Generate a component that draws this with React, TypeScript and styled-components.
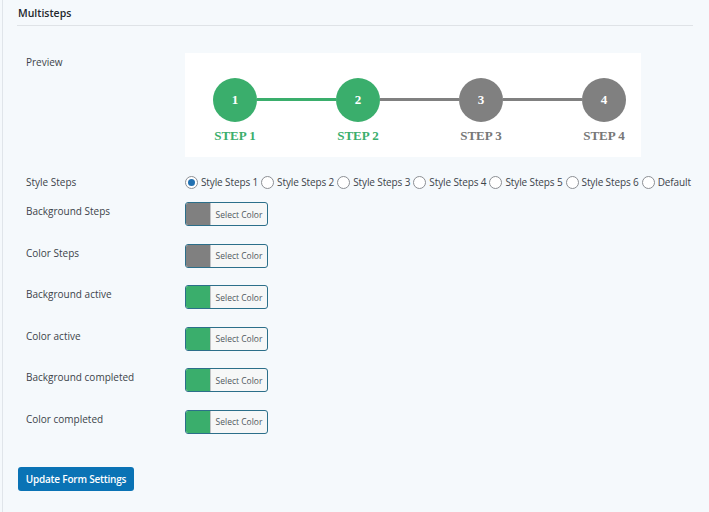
import styled, { createGlobalStyle } from "styled-components";

const GlobalStyle = createGlobalStyle`
  html, body {
    margin: 0;
    padding: 0;
    background: #f5f9fc;
  }
  body {
    font-family: "Open Sans", "Noto Sans", sans-serif;
    color: #3c434a;
  }
`;

const GREEN = "#3aae6c";
const GREY = "#808080";

const Page = styled.div`
  margin-left: 2px;
  min-height: 512px;
  border-left: 1px solid #e0e5ea;
  box-sizing: border-box;
`;

const Header = styled.div`
  margin: 0 16px 0 14px;
  height: 25px;
  border-bottom: 1px solid #dfe3e7;
  display: flex;
  align-items: center;
  padding-left: 1px;
`;

const Title = styled.h2`
  margin: 0;
  font-size: 10.5px;
  font-weight: 600;
  color: #23282d;
`;

const Form = styled.div`
  padding: 27px 0 0 15px;
  display: flex;
  flex-direction: column;
`;

const Row = styled.div<{ $height: number; $top?: number }>`
  display: grid;
  grid-template-columns: 159px 1fr;
  padding-left: 8px;
  height: ${(p) => p.$height}px;
  margin-top: ${(p) => p.$top ?? 0}px;
`;

const Label = styled.div<{ $pad?: number }>`
  font-size: 10px;
  line-height: 14px;
  padding-top: ${(p) => p.$pad ?? 2}px;
  color: #3c434a;
`;

const PreviewBox = styled.div`
  width: 456px;
  height: 104px;
  background: #fff;
  box-sizing: border-box;
  padding: 25px 0 0 28px;
  display: flex;
  align-items: flex-start;
`;

const Step = styled.div`
  width: 44px;
  display: flex;
  flex-direction: column;
  align-items: center;
`;

const Circle = styled.div<{ $color: string }>`
  width: 44px;
  height: 44px;
  border-radius: 50%;
  background: ${(p) => p.$color};
  color: #fff;
  font-family: "Liberation Serif", "Times New Roman", serif;
  font-weight: 700;
  font-size: 13px;
  display: flex;
  align-items: center;
  justify-content: center;
`;

const StepName = styled.div<{ $color: string }>`
  margin-top: 6px;
  white-space: nowrap;
  font-family: "Liberation Serif", "Times New Roman", serif;
  font-weight: 700;
  font-size: 13px;
  line-height: 16px;
  color: ${(p) => p.$color};
`;

const Connector = styled.div<{ $color: string }>`
  width: 79px;
  height: 3px;
  margin-top: 20px;
  background: ${(p) => p.$color};
`;

const Radios = styled.div`
  display: flex;
  align-items: center;
  gap: 3px;
  font-size: 10px;
  letter-spacing: -0.12px;
  white-space: nowrap;
`;

const RadioItem = styled.label`
  display: flex;
  align-items: center;
  gap: 3px;
  color: #3c434a;
`;

const RadioDot = styled.span<{ $checked?: boolean }>`
  width: 13px;
  height: 13px;
  border-radius: 50%;
  border: 1px solid #8c8f94;
  background: #fff;
  box-sizing: border-box;
  display: flex;
  align-items: center;
  justify-content: center;
  &::after {
    content: "";
    width: 7px;
    height: 7px;
    border-radius: 50%;
    background: ${(p) => (p.$checked ? "#2271b1" : "transparent")};
  }
`;

const ColorButton = styled.div`
  width: 83px;
  height: 24px;
  box-sizing: border-box;
  border: 1px solid #2c6f8a;
  border-radius: 3px;
  display: flex;
  overflow: hidden;
  background: #f6f7f7;
`;

const Swatch = styled.span<{ $color: string }>`
  width: 24px;
  background: ${(p) => p.$color};
  border-right: 1px solid #c3c4c7;
`;

const SwatchText = styled.span`
  flex: 1;
  font-size: 8.5px;
  color: #50575e;
  display: flex;
  align-items: center;
  justify-content: center;
`;

const SubmitButton = styled.button`
  margin-top: 33px;
  width: 116px;
  height: 24px;
  border: none;
  border-radius: 3px;
  background: #0a73b5;
  color: #fff;
  font-family: "Open Sans", "Noto Sans", sans-serif;
  font-size: 10px;
  letter-spacing: -0.2px;
  font-weight: 600;
  padding: 0;
  align-self: flex-start;
`;

const steps = [
  { n: 1, color: GREEN },
  { n: 2, color: GREEN },
  { n: 3, color: GREY },
  { n: 4, color: GREY },
];

const styleOptions = [
  "Style Steps 1",
  "Style Steps 2",
  "Style Steps 3",
  "Style Steps 4",
  "Style Steps 5",
  "Style Steps 6",
  "Default",
];

const colorRows = [
  { label: "Background Steps", color: GREY },
  { label: "Color Steps", color: GREY },
  { label: "Background active", color: GREEN },
  { label: "Color active", color: GREEN },
  { label: "Background completed", color: GREEN },
  { label: "Color completed", color: GREEN },
];

const App = () => {
  return (
    <Page>
      <GlobalStyle />
      <Header>
        <Title>Multisteps</Title>
      </Header>
      <Form>
        <Row $height={104}>
          <Label>Preview</Label>
          <PreviewBox>
            {steps.map((s, i) => [
              i > 0 && <Connector key={`c${s.n}`} $color={s.color} />,
              <Step key={s.n}>
                <Circle $color={s.color}>{s.n}</Circle>
                <StepName $color={s.color === GREEN ? GREEN : "#777"}>STEP {s.n}</StepName>
              </Step>,
            ])}
          </PreviewBox>
        </Row>
        <Row $height={18} $top={16}>
          <Label $pad={2}>Style Steps</Label>
          <Radios>
            {styleOptions.map((o, i) => (
              <RadioItem key={o}>
                <RadioDot $checked={i === 0} />
                {o}
              </RadioItem>
            ))}
          </Radios>
        </Row>
        {colorRows.map((r, i) => (
          <Row key={r.label} $height={24} $top={i === 0 ? 11 : 17.5}>
            <Label>{r.label}</Label>
            <ColorButton>
              <Swatch $color={r.color} />
              <SwatchText>Select Color</SwatchText>
            </ColorButton>
          </Row>
        ))}
        <SubmitButton>Update Form Settings</SubmitButton>
      </Form>
    </Page>
  );
};

export default App;
